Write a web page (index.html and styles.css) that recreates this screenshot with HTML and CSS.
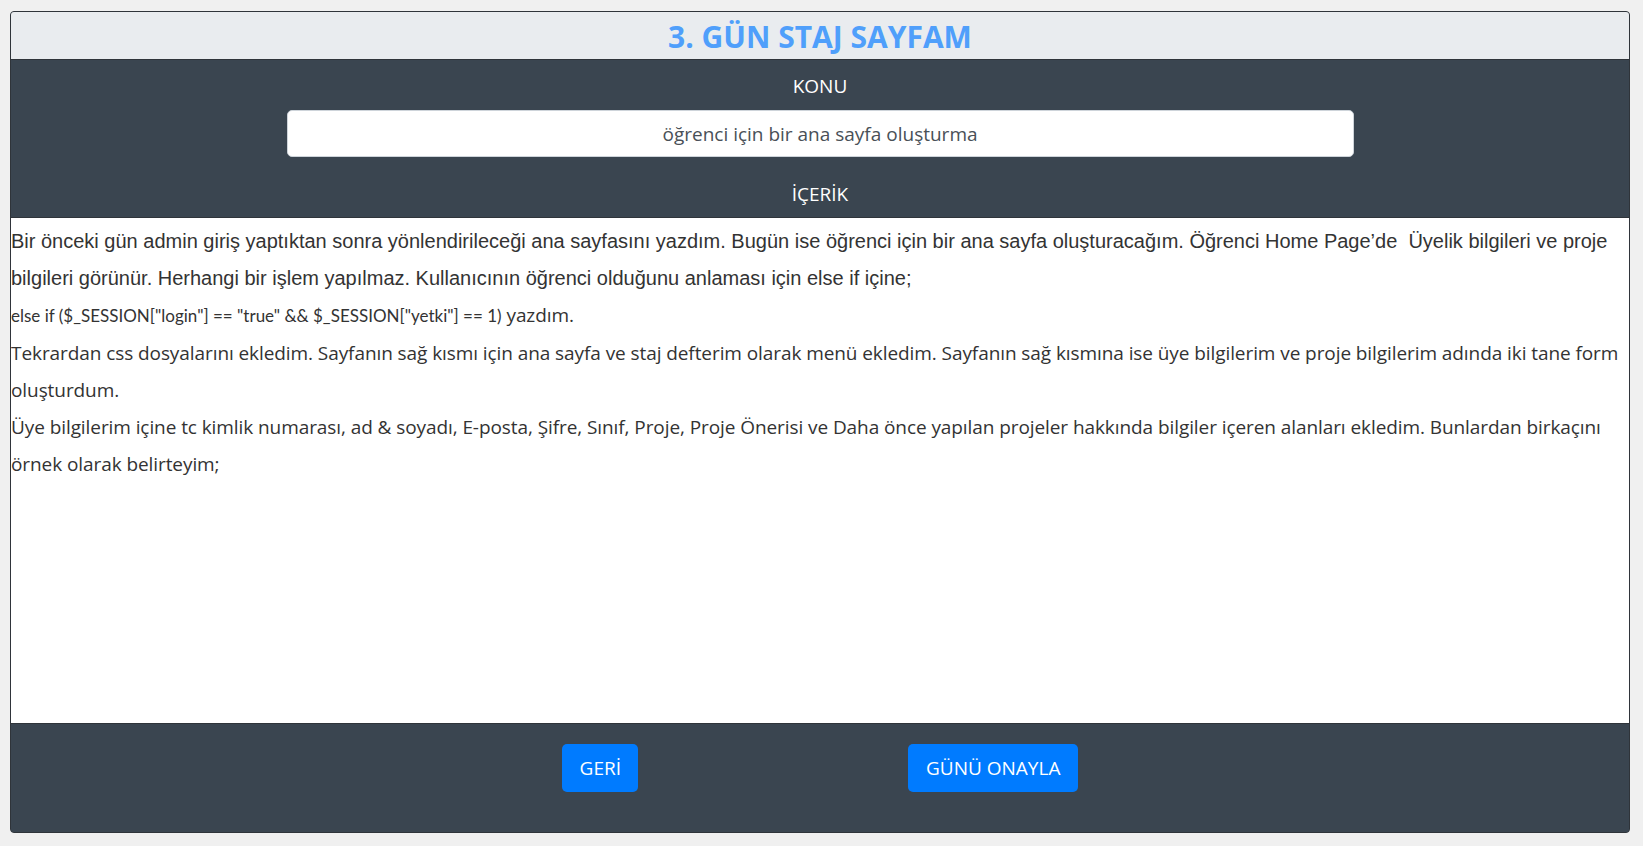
FILE: index.html
```html
<!DOCTYPE html>
<html lang="tr">
<head>
<meta charset="utf-8">
<title>3. GÜN STAJ SAYFAM</title>
<link rel="stylesheet" href="styles.css">
</head>
<body>
<div class="card">
  <div class="card-header">
    <h1 class="title">3. GÜN STAJ SAYFAM</h1>
  </div>
  <div class="topic">
    <div class="label">KONU</div>
    <div class="topic-input">öğrenci için bir ana sayfa oluşturma</div>
    <div class="label label-content">İÇERİK</div>
  </div>
  <div class="content">
    <p class="para"><span class="arial">Bir önceki gün admin giriş yaptıktan sonra yönlendirileceği ana sayfasını yazdım. Bugün ise öğrenci için bir ana sayfa oluşturacağım. Öğrenci Home Page’de&nbsp; Üyelik bilgileri ve proje bilgileri görünür. Herhangi bir işlem yapılmaz. Kullanıcının öğrenci olduğunu anlaması için else if içine;</span></p>
    <p class="para"><span class="code">else if ($_SESSION["login"] == "true" &amp;&amp; $_SESSION["yetki"] == 1)</span> yazdım.</p>
    <p class="para">Tekrardan css dosyalarını ekledim. Sayfanın sağ kısmı için ana sayfa ve staj defterim olarak menü ekledim. Sayfanın sağ kısmına ise üye bilgilerim ve proje bilgilerim adında iki tane form oluşturdum.</p>
    <p class="para">Üye bilgilerim içine tc kimlik numarası, ad &amp; soyadı, E-posta, Şifre, Sınıf, Proje, Proje Önerisi ve Daha önce yapılan projeler hakkında bilgiler içeren alanları ekledim. Bunlardan birkaçını örnek olarak belirteyim;</p>
  </div>
  <div class="card-footer">
    <button class="btn">GERİ</button>
    <button class="btn">GÜNÜ ONAYLA</button>
  </div>
</div>
</body>
</html>
```
FILE: styles.css
```css
* { box-sizing: border-box; }
html, body { margin: 0; padding: 0; }
body {
  background: #f0f0f0;
  font-family: "Open Sans", "Noto Sans", sans-serif;
  color: #333;
}
.card {
  margin: 11px 13px 0 10px;
  height: 822px;
  border: 1px solid #2f343a;
  border-radius: 4px;
  overflow: hidden;
  display: flex;
  flex-direction: column;
  background: #3a4550;
}
.card-header {
  background: #e9ecef;
  height: 48px;
  border-bottom: 1px solid #2f343a;
  display: flex;
  align-items: center;
  justify-content: center;
}
.title {
  margin: 0;
  font-size: 30px;
  font-weight: 700;
  color: #4f9ffb;
  line-height: 1;
  padding-top: 2px;
}
.topic {
  background: #3a4550;
  padding: 11px 0 8px;
  display: flex;
  flex-direction: column;
  align-items: center;
  border-bottom: 1px solid #2f343a;
}
.label {
  color: #fff;
  font-size: 19px;
  line-height: 30px;
}
.label-content { margin-top: 22px; }
.topic-input {
  margin-top: 9px;
  width: 1067px;
  height: 47px;
  background: #fff;
  border: 1px solid #ced4da;
  border-radius: 5px;
  color: #495057;
  font-size: 19px;
  display: flex;
  align-items: center;
  justify-content: center;
}
.content {
  background: #fff;
  height: 506px;
  border-bottom: 1px solid #2f343a;
  padding: 5px 0 0 0;
  font-size: 19px;
  letter-spacing: -0.08px;
  color: #333;
}
.para {
  margin: 0;
  line-height: 37.2px;
}
.arial {
  font-family: "Liberation Sans", Arial, sans-serif;
  font-size: 20px;
  letter-spacing: 0;
}
.code {
  font-family: "Lato", sans-serif;
  font-size: 17px;
  letter-spacing: 0;
}
.card-footer {
  flex: 1;
  background: #3a4550;
  display: flex;
  justify-content: center;
  align-items: flex-start;
  gap: 270px;
  padding-top: 20px;
}
.btn {
  height: 48px;
  background: #007bff;
  color: #fff;
  border: 0;
  border-radius: 5px;
  font-family: "Open Sans", sans-serif;
  font-size: 19px;
  padding: 0 17.5px;
  cursor: pointer;
}
```
